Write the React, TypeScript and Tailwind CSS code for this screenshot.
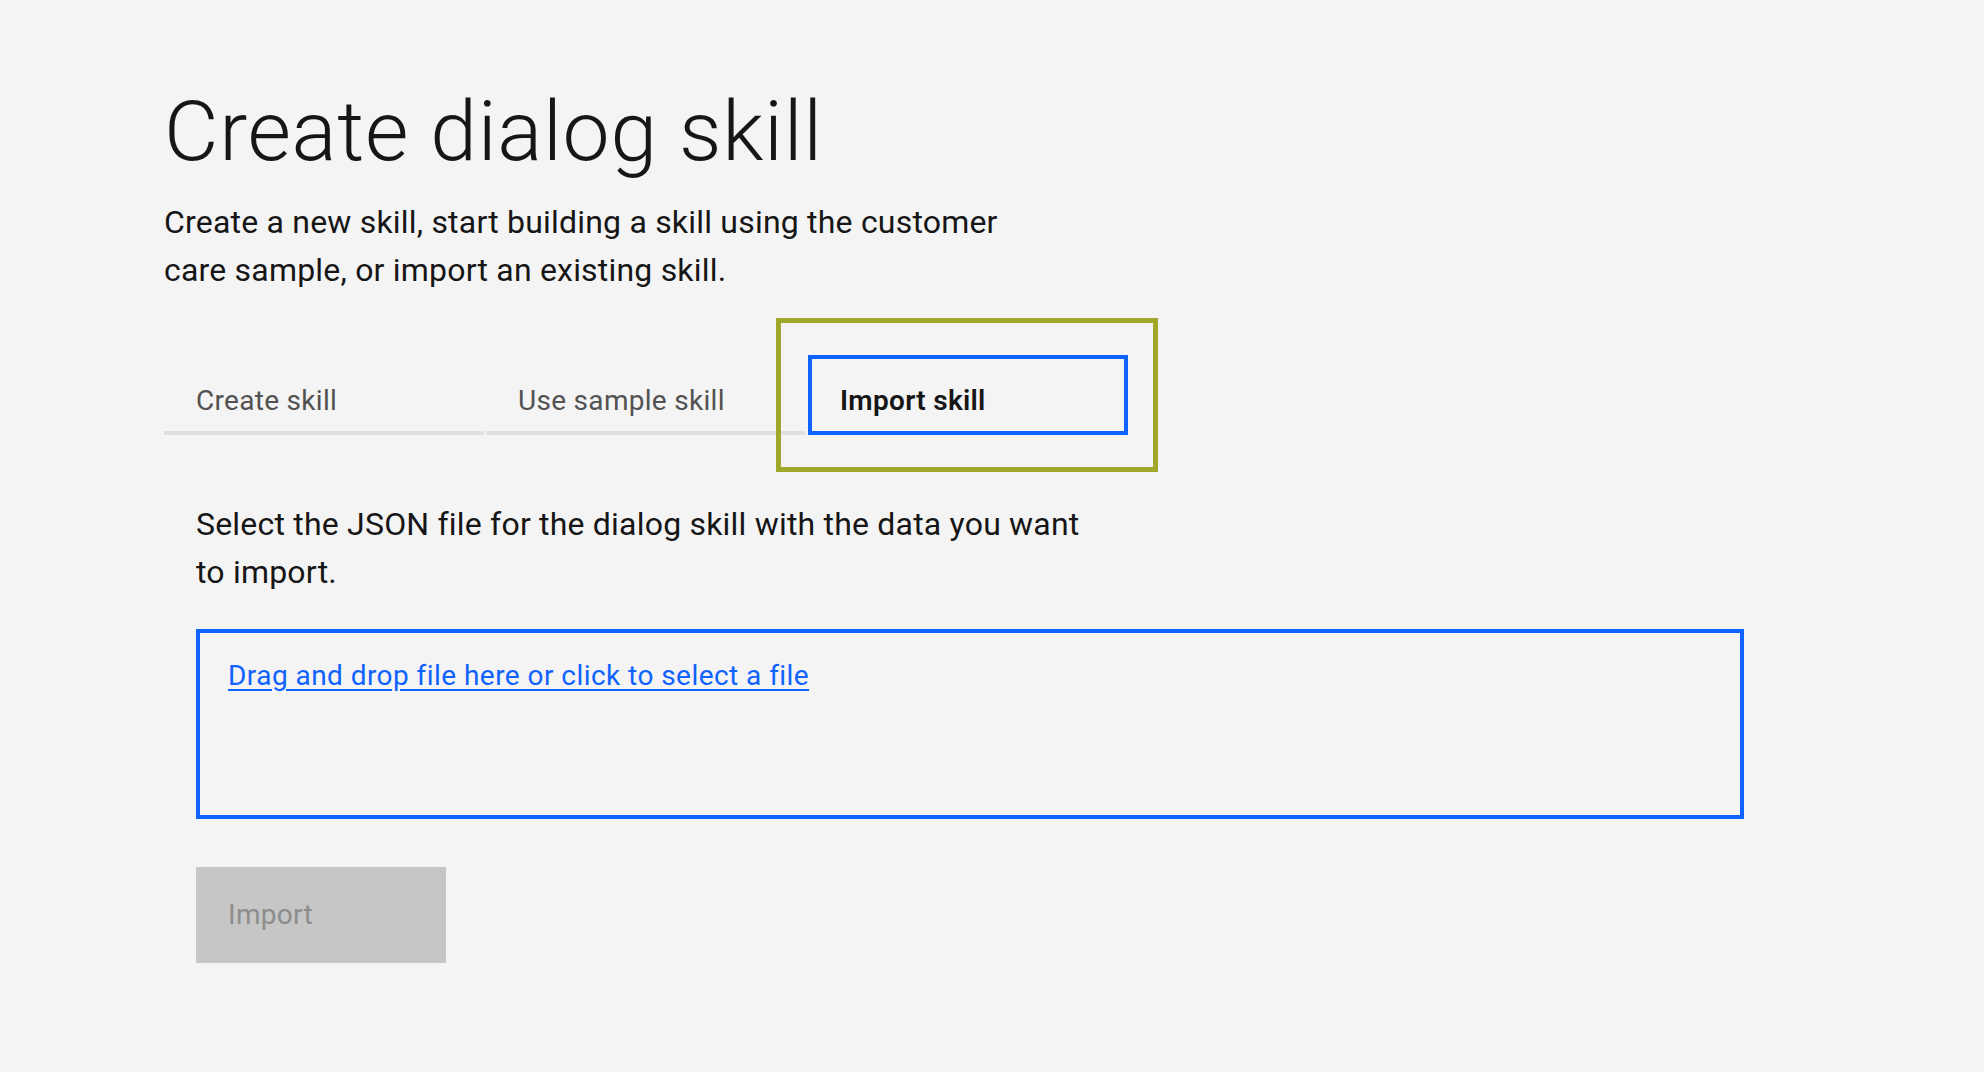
import { useState } from 'react';

const tabs = ['Create skill', 'Use sample skill', 'Import skill'];

export default function App() {
  const [active, setActive] = useState(2);

  return (
    <div className="min-h-screen bg-[#f4f4f4] font-['Roboto',sans-serif] text-[#161616]">
      <div className="pl-[164px] pt-[82px]">
        {/* Header */}
        <h1 className="text-[84px] font-light leading-[100px] tracking-[0.7px]">Create dialog skill</h1>
        <p className="mt-[16px] max-w-[860px] text-[32px] leading-[48px] tracking-[0.2px]">
          Create a new skill, start building a skill using the customer care sample, or import an existing skill.
        </p>

        {/* Tabs */}
        <div className="mt-[61px] flex gap-[2px]">
          {tabs.map((label, i) => (
            <div key={label} className="relative">
              <button
                onClick={() => setActive(i)}
                className={
                  i === active
                    ? 'box-border block h-[80px] w-[320px] border-[4px] border-[#0f62fe] pl-[28px] pt-[11px] text-left text-[28px] font-semibold leading-[28px] tracking-[0.3px] text-[#161616]'
                    : 'box-border block h-[80px] w-[320px] border-b-[4px] border-[#e0e0e0] pl-[32px] pt-[15px] text-left text-[28px] leading-[28px] tracking-[0.3px] text-[#525252]'
                }
              >
                {label}
              </button>
              {i === active && (
                <div className="pointer-events-none absolute -bottom-[37px] -left-[32px] -right-[30px] -top-[37px] border-[5px] border-[#9fa829]" />
              )}
            </div>
          ))}
        </div>

        {/* Import panel */}
        <div className="pl-[32px]">
          <p className="mt-[65px] max-w-[900px] text-[32px] leading-[48px] tracking-[0.2px]">
            Select the JSON file for the dialog skill with the data you want to import.
          </p>

          <div className="mt-[33px] box-border h-[190px] w-[1548px] border-[4px] border-[#0f62fe] px-[28px] pt-[23px]">
            <a
              href="#"
              className="text-[28px] leading-[40px] tracking-[0.45px] text-[#0f62fe] underline underline-offset-[4px]"
            >
              Drag and drop file here or click to select a file
            </a>
          </div>

          <button
            disabled
            className="mt-[48px] box-border h-[96px] w-[250px] bg-[#c6c6c6] pl-[32px] text-left text-[28px] tracking-[0.3px] text-[#8d8d8d]"
          >
            Import
          </button>
        </div>
      </div>
    </div>
  );
}
